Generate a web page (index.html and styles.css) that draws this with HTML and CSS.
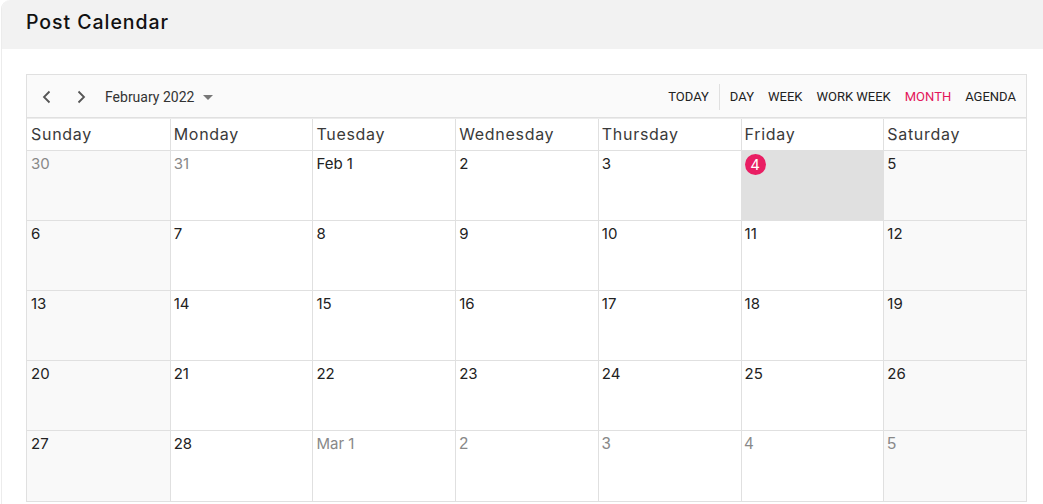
FILE: index.html
```html
<!DOCTYPE html>
<html>
<head>
<meta charset="utf-8">
<link rel="stylesheet" href="styles.css">
</head>
<body>
<div class="card">
  <div class="card-head"><h1 class="title">Post Calendar</h1></div>
  <div class="card-body">
    <div class="calendar">
      <div class="toolbar">
        <div class="tb-left">
          <span class="nav"><svg width="16" height="16" viewBox="0 0 16 16"><path d="M10.5 2.5 5 8l5.5 5.5" fill="none" stroke="#555" stroke-width="1.8"/></svg></span>
          <span class="nav"><svg width="16" height="16" viewBox="0 0 16 16"><path d="M5.5 2.5 11 8l-5.5 5.5" fill="none" stroke="#555" stroke-width="1.8"/></svg></span>
          <span class="month-label">February 2022</span>
          <span class="caret"><svg width="10" height="6" viewBox="0 0 10 6"><path d="M0 0h10L5 5z" fill="#777"/></svg></span>
        </div>
        <div class="tb-right">
          <span class="tb-btn">Today</span>
          <span class="sep"></span>
          <span class="tb-btn">Day</span>
          <span class="tb-btn">Week</span>
          <span class="tb-btn">Work Week</span>
          <span class="tb-btn active">Month</span>
          <span class="tb-btn">Agenda</span>
        </div>
      </div>
      <div class="grid">
        <div class="dh first">Sunday</div><div class="dh">Monday</div><div class="dh">Tuesday</div><div class="dh">Wednesday</div><div class="dh">Thursday</div><div class="dh">Friday</div><div class="dh">Saturday</div>

        <div class="cell first we other">30</div><div class="cell other">31</div><div class="cell">Feb 1</div><div class="cell">2</div><div class="cell">3</div><div class="cell today"><span class="badge">4</span></div><div class="cell we">5</div>

        <div class="cell first we">6</div><div class="cell">7</div><div class="cell">8</div><div class="cell">9</div><div class="cell">10</div><div class="cell">11</div><div class="cell we">12</div>

        <div class="cell first we">13</div><div class="cell">14</div><div class="cell">15</div><div class="cell">16</div><div class="cell">17</div><div class="cell">18</div><div class="cell we">19</div>

        <div class="cell first we">20</div><div class="cell">21</div><div class="cell">22</div><div class="cell">23</div><div class="cell">24</div><div class="cell">25</div><div class="cell we">26</div>

        <div class="cell first we">27</div><div class="cell">28</div><div class="cell other">Mar 1</div><div class="cell other alt">2</div><div class="cell other alt">3</div><div class="cell other alt">4</div><div class="cell we other alt">5</div>
      </div>
    </div>
  </div>
</div>
</body>
</html>
```
FILE: styles.css
```css
* { box-sizing: border-box; }
html, body { margin: 0; padding: 0; background: #fff; }
body { font-family: "Inter", "Open Sans", sans-serif; color: #222; }

.card {
  margin-left: 1px;
  border-left: 1px solid #ececec;
  border-top-left-radius: 9px;
  overflow: hidden;
  height: 504px;
}
.card-head {
  background: #f2f2f2;
  height: 49px;
  padding: 0 24px;
  display: flex;
  align-items: center;
}
.title {
  margin: 0;
  margin-top: -6px;
  font-size: 19.5px;
  font-weight: 500;
  color: #111;
  letter-spacing: 0.95px;
}
.card-body { padding: 25px 0 0 24px; }

.calendar {
  width: 1001px;
  border: 1px solid #e0e0e0;
}
.toolbar {
  height: 43px;
  background: #fafafa;
  border-bottom: 1px solid #e0e0e0;
  display: flex;
  align-items: center;
  justify-content: space-between;
  font-family: "Roboto", sans-serif;
  font-size: 13px;
  color: #222;
  padding-top: 2px;
}
.tb-left { display: flex; align-items: center; padding-left: 3px; }
.nav { width: 34px; height: 28px; display: flex; align-items: center; justify-content: center; }
.month-label { font-size: 14px; color: #333; margin-left: 7px; }
.caret { margin-left: 9px; display: flex; align-items: center; padding-top: 1px; }
.tb-right { display: flex; align-items: center; padding-right: 3px; }
.tb-btn { text-transform: uppercase; padding: 0 7px; line-height: 28px; }
.tb-btn.active { color: #e3165b; }
.sep { width: 1px; height: 26px; background: #e0e0e0; margin: 0 3px; }

.grid {
  display: grid;
  grid-template-columns: repeat(7, 1fr);
  grid-template-rows: 32px repeat(5, 70px);
  border-top: 1px solid #ececec;
}
.dh {
  border-left: 1px solid #e0e0e0;
  border-bottom: 1px solid #e0e0e0;
  padding: 5px 0 0 3px;
  font-size: 16px;
  letter-spacing: 0.7px;
  font-weight: 400;
  color: #3a3a3a;
}
.cell {
  border-left: 1px solid #e0e0e0;
  border-bottom: 1px solid #e0e0e0;
  padding: 3px 0 0 3px;
  font-size: 15px;
  line-height: 20px;
  color: #222;
  background: #fff;
}
.dh.first, .cell.first { border-left: none; padding-left: 4px; }
.grid > .cell:nth-last-child(-n+7) { border-bottom: none; }
.cell.we { background: #f9f9f9; }
.cell.other { color: #888; }
.cell.alt { font-family: "Liberation Sans", Arial, sans-serif; font-size: 16px; color: #888; }
.cell.today { background: #e0e0e0; padding: 3px 0 0 3px; }
.badge {
  display: inline-flex;
  width: 21px;
  height: 21px;
  border-radius: 50%;
  background: #e91e63;
  color: #fff;
  align-items: center;
  justify-content: center;
  font-size: 15px;
}
```
